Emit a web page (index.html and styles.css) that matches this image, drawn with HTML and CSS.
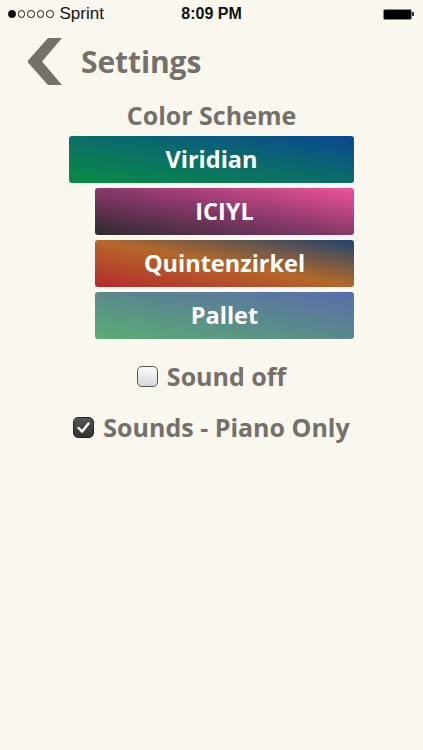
FILE: index.html
```html
<!DOCTYPE html>
<html>
<head>
<meta charset="utf-8">
<link rel="stylesheet" href="styles.css">
</head>
<body>
<div class="status">
  <div class="carrier"><span class="dots"><i class="dot on"></i><i class="dot"></i><i class="dot"></i><i class="dot"></i><i class="dot"></i></span>Sprint</div>
  <div class="time">8:09 PM</div>
  <div class="battery"><span class="cell"></span><span class="nub"></span></div>
</div>
<div class="header">
  <svg class="back" width="35" height="47" viewBox="0 0 35 47"><polygon points="21,0 35,0 15,23.5 35,47 21,47 1,24.5 1,22.5" fill="#77706a"/></svg>
  <h1 class="title">Settings</h1>
</div>
<h2 class="subtitle">Color Scheme</h2>
<div class="schemes">
  <div class="scheme viridian">Viridian</div>
  <div class="scheme iciyl indent">ICIYL</div>
  <div class="scheme quint indent">Quintenzirkel</div>
  <div class="scheme pallet indent">Pallet</div>
</div>
<div class="options">
  <div class="option"><span class="box"></span><span>Sound off</span></div>
  <div class="option"><span class="box checked"><svg width="21" height="21" viewBox="0 0 21 21"><path d="M5 11 L9 15 L16 6" fill="none" stroke="#fff" stroke-width="2.6" stroke-linecap="round" stroke-linejoin="round"/></svg></span><span>Sounds - Piano Only</span></div>
</div>
</body>
</html>
```
FILE: styles.css
```css
html, body { margin: 0; padding: 0; }
body {
  background: #faf7ef;
  width: 423px;
  height: 750px;
  font-family: "Open Sans", "Noto Sans", sans-serif;
  color: #76706a;
}
.status {
  height: 28px;
  display: flex;
  align-items: center;
  position: relative;
  font-family: "Liberation Sans", Arial, sans-serif;
  color: #111;
  font-size: 17px;
}
.carrier { margin-left: 8px; display: flex; align-items: center; }
.dots { display: flex; gap: 2px; margin-right: 6px; }
.dot {
  width: 5.5px;
  height: 5.5px;
  border: 1px solid #111;
  border-radius: 50%;
}
.dot.on { background: #111; }
.time {
  position: absolute;
  left: 0; right: 0; text-align: center;
  font-weight: bold;
  font-size: 16px;
}
.battery {
  margin-left: auto;
  margin-right: 9px;
  display: flex;
  align-items: center;
}
.cell {
  width: 27px;
  height: 9px;
  background: #000;
  border: 1px solid #888;
  border-radius: 2px;
}
.nub { width: 2px; height: 4px; background: #333; }
.header {
  display: flex;
  align-items: center;
  padding: 10px 0 0 27px;
  height: 47px;
}
.back { display: block; }
.title {
  margin: 0 0 0 19px;
  font-size: 30px;
  font-weight: 700;
  letter-spacing: -0.1px;
  line-height: 1;
}
.subtitle {
  margin: 15px 0 0;
  text-align: center;
  font-size: 25px;
  font-weight: 700;
  line-height: 31px;
  letter-spacing: 0;
}
.schemes {
  display: flex;
  flex-direction: column;
  gap: 5px;
  margin: 5px 69px 0 69px;
}
.scheme {
  height: 47px;
  border-radius: 3px;
  display: flex;
  align-items: center;
  justify-content: center;
  color: #fff;
  font-size: 23.5px;
  font-weight: 700;
  padding-bottom: 2px;
  box-sizing: border-box;
}
.indent { margin-left: 26px; }
.viridian { background: linear-gradient(to top right, #0a8c44, #0a6a6c 55%, #0b4692); }
.iciyl { background: linear-gradient(to top right, #2c2a2e, #88386a 50%, #ee5498); }
.quint { background: linear-gradient(to top right, #b42a2c, #b4682a 50%, #20446e); }
.pallet { background: linear-gradient(to top right, #5aae74, #5a8a8c 50%, #5a6cac); }
.options {
  display: flex;
  flex-direction: column;
  align-items: center;
  gap: 19px;
  margin-top: 21px;
  font-size: 25px;
  font-weight: 700;
}
.option {
  display: flex;
  align-items: center;
  gap: 9px;
  height: 32px;
}
.box {
  width: 19px;
  height: 19px;
  border: 1px solid #555;
  border-radius: 5px;
  background: linear-gradient(#fafafa, #d8d8d8);
  display: flex;
  align-items: center;
  justify-content: center;
}
.box.checked { background: linear-gradient(#555, #333); border-color: #222; }
.box svg { display: block; }
```
